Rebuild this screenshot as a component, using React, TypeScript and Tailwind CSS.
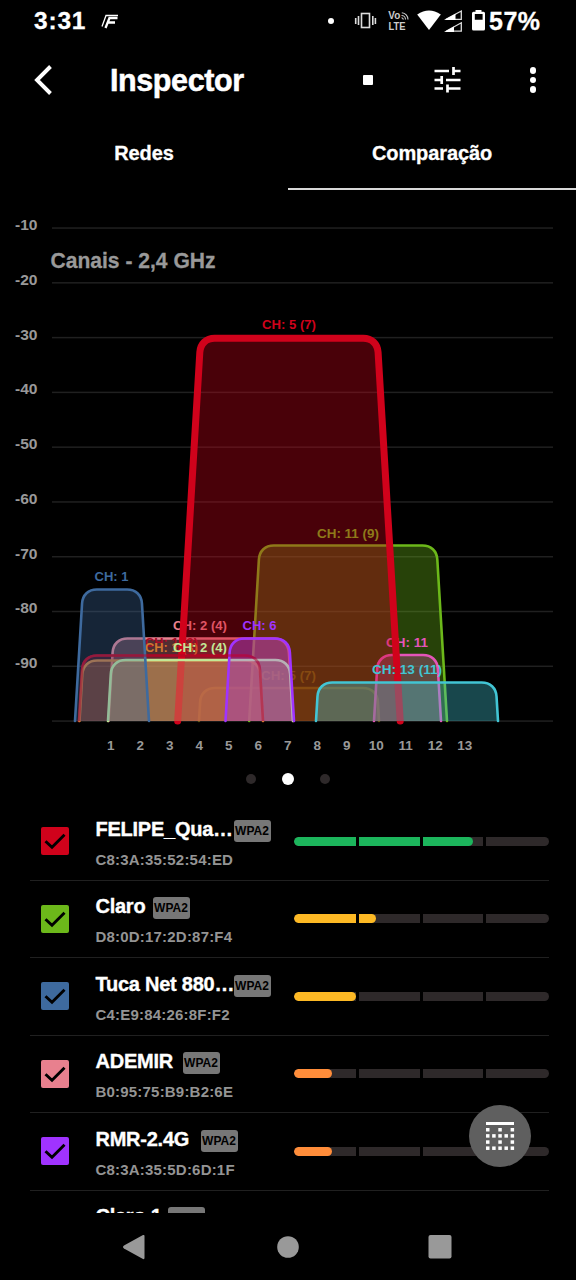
import React from "react";

type Network = {
  name: string;
  mac: string;
  box: string;
  bar: string;
  level: number;
  slot: string;
};

const networks: Network[] = [
  { name: "FELIPE_Qua…", mac: "C8:3A:35:52:54:ED", box: "bg-[#d0021b]", bar: "#1cb55c", level: 179.5, slot: "w-[138px]" },
  { name: "Claro", mac: "D8:0D:17:2D:87:F4", box: "bg-[#6cb81a]", bar: "#fdb924", level: 82.5, slot: "w-[57px]" },
  { name: "Tuca Net 880…", mac: "C4:E9:84:26:8F:F2", box: "bg-[#3e6a9e]", bar: "#fdb924", level: 62, slot: "w-[138px]" },
  { name: "ADEMIR", mac: "B0:95:75:B9:B2:6E", box: "bg-[#e8808e]", bar: "#ff8d3a", level: 38.5, slot: "w-[87px]" },
  { name: "RMR-2.4G", mac: "C8:3A:35:5D:6D:1F", box: "bg-[#a033ff]", bar: "#ff8d3a", level: 38.5, slot: "w-[105px]" },
  { name: "Claro 1", mac: "D8:0D:17:2D:87:F5", box: "bg-[#4dc3d3]", bar: "#ff8d3a", level: 38.5, slot: "w-[72px]" },
];

type Band = {
  l: number;
  r: number;
  y: number;
  color: string;
  opacity?: number;
  fill?: number;
  width?: number;
  label: string;
  lx: number;
  ly: number;
  lw: number;
};

// Painted back to front.
const bands: Band[] = [
  { l: 199, r: 379, y: 688, color: "#c0a010", opacity: 0.45, fill: 0.3, label: "CH: 5 (7)", lx: 261, ly: 680, lw: 55 },
  { l: 249.2, r: 447, y: 545.5, color: "#6cb81a", fill: 0.36, label: "CH: 11 (9)", lx: 317, ly: 538, lw: 62 },
  { l: 374, r: 441, y: 655, color: "#e455b8", fill: 0.3, label: "CH: 11", lx: 386, ly: 647, lw: 42 },
  { l: 108.5, r: 293, y: 638.5, color: "#e8808e", fill: 0.35, label: "CH: 2 (4)", lx: 173, ly: 630, lw: 54 },
  { l: 79, r: 263, y: 655.5, color: "#a80a26", fill: 0.3, label: "CH: 1 (3)", lx: 145, ly: 647, lw: 53 },
  { l: 79.5, r: 263, y: 660.5, color: "#d07830", fill: 0.35, label: "CH: 1 (3)", lx: 145, ly: 652, lw: 53 },
  { l: 177.7, r: 400.2, y: 338.3, color: "#d0021b", fill: 0.35, width: 7, label: "CH: 5 (7)", lx: 262, ly: 329, lw: 54 },
  { l: 108, r: 293, y: 660, color: "#c2e896", fill: 0.28, label: "CH: 2 (4)", lx: 173, ly: 652, lw: 54 },
  { l: 75, r: 149, y: 589.5, color: "#3e6a9e", fill: 0.35, label: "CH: 1", lx: 94.5, ly: 581, lw: 34 },
  { l: 225.5, r: 294, y: 638.5, color: "#a033ff", fill: 0.3, label: "CH: 6", lx: 242.5, ly: 630, lw: 34 },
  { l: 316, r: 498, y: 682.5, color: "#42c5d4", fill: 0.36, label: "CH: 13 (11)", lx: 372, ly: 674, lw: 70 },
];

function outline({ l, r, y }: Band) {
  const h = 721 - y;
  const s = 0.06;
  const a = l + h * s;
  const b = r - h * s;
  const k = 14;
  const c = 5.5;
  return `M${l} 721L${a - k * s} ${y + k}C${a - c * s} ${y + c} ${a + c} ${y} ${a + k} ${y}H${b - k}C${b - c} ${y} ${b + c * s} ${y + c} ${b + k * s} ${y + k}L${r} 721`;
}

function Chart() {
  return (
    <svg width="576" height="570" viewBox="0 190 576 570" className="block shrink-0 font-bold" fontFamily="'Liberation Sans', Arial, sans-serif">
      {Array.from({ length: 10 }, (_, i) => (
        <rect key={i} x="52" y={227.3 + i * 54.78} width="501" height="1.5" fill="#202020" />
      ))}
      {Array.from({ length: 9 }, (_, i) => (
        <text key={i} x="15" y={230 + i * 54.78} fontSize="14" fill="#999" textLength="22.5" lengthAdjust="spacingAndGlyphs">
          {`-${(i + 1) * 10}`}
        </text>
      ))}
      <text x="50.5" y="268" fontSize="22.5" fill="#999" stroke="#999" strokeWidth="0.3" textLength="165" lengthAdjust="spacingAndGlyphs">
        Canais - 2,4 GHz
      </text>
      {bands.map((b, i) => (
        <g key={i} opacity={b.opacity ?? 1}>
          <path d={outline(b)} fill={b.color} fillOpacity={b.fill} />
          <text x={b.lx} y={b.ly} fontSize="13.5" fill={b.color} textLength={b.lw} lengthAdjust="spacingAndGlyphs">
            {b.label}
          </text>
          <path d={outline(b)} fill="none" stroke={b.color} strokeWidth={b.width ?? 2.6} strokeLinecap="round" />
        </g>
      ))}
      <path d={outline(bands[4])} fill="none" stroke="#a8082a" strokeOpacity="0.5" strokeWidth="2.600" />
      {Array.from({ length: 13 }, (_, i) => (
        <text key={i} x={110.7 + i * 29.5} y="750" fontSize="13.5" fill="#999" textAnchor="middle">
          {i + 1}
        </text>
      ))}
    </svg>
  );
}

function StatusBar() {
  return (
    <div className="flex h-10 shrink-0 items-center pt-0.5">
      <span className="ml-[34px] w-[53px] text-[24.500px] leading-none tracking-[0.800px] [-webkit-text-stroke:0.300px]">3:31</span>
      <svg className="ml-[14px]" width="18" height="16" viewBox="102 13 18 16" fill="none" stroke="#fff">
        <path d="M106.5 15.5h12.500M107 15.500l-4 11" strokeWidth="1.300" />
        <path d="M118.500 18h-8l-4 10M109.500 22.500h6.500" strokeWidth="2.300" />
      </svg>
      <svg className="ml-auto mr-[2px]" width="160" height="26" viewBox="328 9 160 26">
        <circle cx="332" cy="22" r="3" fill="#fff" />
        <g fill="none" stroke="#ddd" strokeWidth="1.6">
          <rect x="362.5" y="14.5" width="8" height="14" />
          <path d="M359.5 17v9M373.8 17v9M356.7 19v6M376.4 19v6" />
        </g>
        <g fill="#ccc" fontFamily="'Liberation Sans', Arial, sans-serif" fontSize="10.5" fontWeight="bold">
          <text x="389.3" y="20.3" textLength="12" lengthAdjust="spacingAndGlyphs">Vo</text>
          <text x="389.5" y="31" textLength="17" lengthAdjust="spacingAndGlyphs">LTE</text>
        </g>
        <path d="M402.5 16.5a4 4 0 0 1 4 4M402.8 13.8a6.8 6.8 0 0 1 6.2 6.8M402.5 18.8a1.7 1.7 0 0 1 1.7 1.8" fill="none" stroke="#ccc" strokeWidth="1.1" />
        <path d="M418.2 15.5Q430 7.5 441.8 15.5L430 31Z" fill="#fff" />
        <g>
          <path d="M447 20.3L462.3 12v8.3Z" fill="none" stroke="#ddd" strokeWidth="1.3" />
          <path d="M445 21L456.5 14.7V21Z" fill="#fff" />
          <path d="M447 32.2L462.3 23.8v8.4Z" fill="none" stroke="#ddd" strokeWidth="1.3" />
          <path d="M445 33L455 27.5V33Z" fill="#fff" />
        </g>
        <path d="M476.500 11h6v1.700h2q1.500 0 1.500 1.500V30q0 1.500-1.500 1.500h-10q-1.500 0-1.500-1.500V14.200q0-1.500 1.500-1.500h2ZM475.800 15v5.800h7.800V15Z" fill="#fff" fillRule="evenodd" />
      </svg>
      <span className="mr-[33px] w-[54px] whitespace-nowrap text-[25px] leading-none tracking-[0.500px] [-webkit-text-stroke:0.300px]">57%</span>
    </div>
  );
}

function Header() {
  return (
    <header className="flex h-20 shrink-0 items-center">
      <svg className="ml-[33px]" width="22" height="32" viewBox="0 0 22 32" fill="none" stroke="#fff" strokeWidth="3.900">
        <path d="M17.500 2.500L4 16L17.500 29.500" />
      </svg>
      <h1 className="ml-[55px] w-[140px] text-[30.500px] leading-none tracking-[-0.400px] [-webkit-text-stroke:0.500px]">Inspector</h1>
      <div className="ml-[113px] size-[9.500px] rounded-[1px] bg-white" />
      <svg className="ml-[61px]" width="28" height="28" viewBox="434 66 28 28" stroke="#fff" strokeWidth="2.700">
        <path d="M434.500 71H449M453 71h7.500M453.500 67v8M434.500 80H442M446 80h14.500M441.700 76v8M434.500 88.500h8.500M447 88.500h13.500M447.500 84.500v8" />
      </svg>
      <div className="ml-[68.500px] flex flex-col gap-[3px]">
        <i className="size-[6.400px] rounded-full bg-white" />
        <i className="size-[6.400px] rounded-full bg-white" />
        <i className="size-[6.400px] rounded-full bg-white" />
      </div>
    </header>
  );
}

function SignalBar({ color, level }: { color: string; level: number }) {
  return (
    <div className="relative h-[9px] w-[255px] overflow-hidden rounded-full bg-[#2e292a]">
      <div className="h-full rounded-full" style={{ width: level, backgroundColor: color }} />
      <div className="absolute inset-0 flex justify-between px-[62.500px]">
        <i className="w-[3px] bg-black" />
        <i className="w-[3px] bg-black" />
        <i className="w-[3px] bg-black" />
      </div>
    </div>
  );
}

function Row({ n }: { n: Network }) {
  return (
    <li className="ml-[30px] mr-[27px] flex h-[77.500px] shrink-0 items-center border-b border-[#202020] pl-[11px]">
      <div className={`flex size-7 shrink-0 items-center justify-center rounded-[2px] ${n.box}`}>
        <svg width="22" height="18" viewBox="0 0 22 18" fill="none" stroke="#000" strokeWidth="2.900">
          <path d="M1.500 9.200L8 15.300L20.500 2.800" />
        </svg>
      </div>
      <div className="ml-[26.500px] w-[198px] shrink-0">
        <div className="flex h-[26px] items-center">
          <span className={`block shrink-0 whitespace-nowrap text-[20px] leading-none tracking-[-0.250px] [-webkit-text-stroke:0.350px] ${n.slot}`}>{n.name}</span>
          <span className="mt-1 flex h-[22px] w-[37px] shrink-0 items-center justify-center rounded-[3px] bg-[#777] text-[12px] leading-none text-black">WPA2</span>
        </div>
        <div className="mt-[10px] text-[15px] leading-none tracking-[0.200px] text-[#949494]">{n.mac}</div>
      </div>
      <SignalBar color={n.bar} level={n.level} />
    </li>
  );
}

export default function App() {
  return (
    <div className="relative flex h-[1280px] w-[576px] flex-col overflow-hidden bg-black font-['Liberation_Sans',Arial,sans-serif] font-bold text-white">
      <StatusBar />
      <Header />
      <nav className="grid h-[70px] shrink-0 grid-cols-2 text-center text-[20px] leading-none tracking-[-0.100px] [-webkit-text-stroke:0.300px]">
        <div className="pt-[23px]">Redes</div>
        <div className="border-b-2 border-[#d8d8d8] pt-[23px]">Comparação</div>
      </nav>
      <Chart />
      <div className="flex h-[43px] shrink-0 items-start justify-center gap-[26px] pt-[13px]">
        <i className="mt-px size-[10px] rounded-full bg-[#2e292a]" />
        <i className="size-[11.500px] rounded-full bg-white" />
        <i className="mt-px size-[10px] rounded-full bg-[#2e292a]" />
      </div>
      <ul className="flex h-[410px] shrink-0 flex-col overflow-hidden">
        {networks.map((n) => (
          <Row key={n.name} n={n} />
        ))}
      </ul>
      <button className="absolute left-[468.500px] top-[1105px] flex size-[62px] items-center justify-center rounded-full bg-[#5f5f5f]" aria-label="Layout">
        <svg width="30" height="30" viewBox="0 0 30 30" fill="#fff">
          <rect x="1" y="1" width="28" height="3" />
          {["x.x.x", "xxxxx", "x.x.x", "xxxxx"].map((line, r) =>
            line.split("").map((c, k) =>
              c === "x" ? <rect key={`${r}-${k}`} x={1 + k * 6.15} y={7 + r * 6.15} width="3.5" height="3.5" /> : null
            )
          )}
        </svg>
      </button>
      <footer className="flex flex-1 items-center">
        <svg width="576" height="40" viewBox="0 1226.500 576 40" fill="#999">
          <path d="M143 1234.500Q144.500 1234 144.500 1235.500V1257.500Q144.500 1259 143 1258.500L124 1248Q122 1246.500 124 1245Z" />
          <circle cx="288" cy="1246.500" r="10.800" />
          <rect x="428.500" y="1234.500" width="23" height="23.500" rx="2" />
        </svg>
      </footer>
    </div>
  );
}
